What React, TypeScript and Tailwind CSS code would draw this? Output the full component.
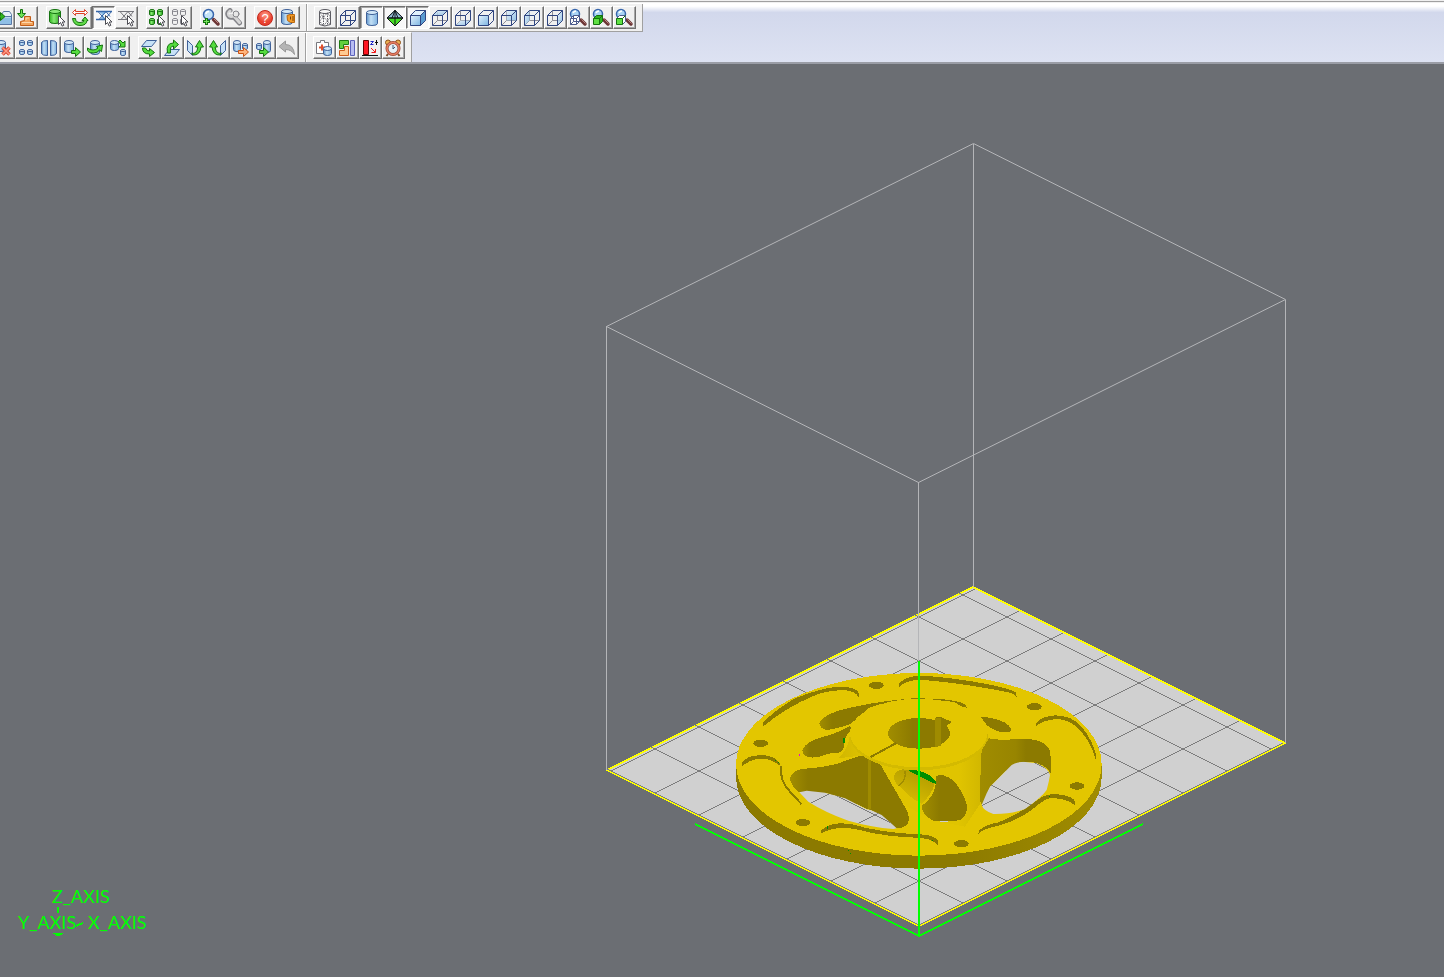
import type { ReactNode } from 'react';
import { clsx } from 'clsx';

interface Tool {
  label: string;
  icon: ReactNode;
  active?: boolean;
}

const NAVY = '#2f4580';
const BLUE = '#7fb2e0';
const GREEN = '#2fb51f';
const DARK_GREEN = '#14720f';

// ---- icon parts, all drawn on a 20x20 board ----

function Cursor({ x = 11, y = 7 }: { x?: number; y?: number }) {
  return (
    <path
      transform={`translate(${x} ${y})`}
      d="M.5.5v9l2-2 1.700 3.600 1.600-.8L4.300 7H7z"
      fill="#fff"
      stroke="#4b4b52"
    />
  );
}

function Cylinder({ x, y, w, h, tone = 'blue' }: { x: number; y: number; w: number; h: number; tone?: 'blue' | 'green' | 'gray' }) {
  const fill = { blue: 'url(#cylBlue)', green: 'url(#cylGreen)', gray: '#f1f1f1' }[tone];
  const top = { blue: '#d3e8f8', green: '#8be87a', gray: '#fff' }[tone];
  const line = { blue: '#3f6199', green: DARK_GREEN, gray: '#85858c' }[tone];
  const r = w > 6 ? 2 : 1;
  return (
    <g stroke={line}>
      <path d={`M${x} ${y + r}v${h - 2 * r}q0 ${r} ${w / 2} ${r}t${w / 2} -${r}v-${h - 2 * r}`} fill={fill} />
      <ellipse cx={x + w / 2} cy={y + r} rx={w / 2} ry={r} fill={top} />
    </g>
  );
}

type Face = 'top' | 'bottom' | 'front' | 'back' | 'left' | 'right';

const FACES: Record<Face, string> = {
  top: 'M2.500 7.500l5-5h10l-5 5z',
  bottom: 'M2.500 17.500l5-5h10l-5 5z',
  front: 'M2.500 7.500h10v10h-10z',
  back: 'M7.500 2.500h10v10h-10z',
  left: 'M2.500 7.500l5-5v10l-5 5z',
  right: 'M12.500 7.500l5-5v10l-5 5z',
};

function WireCube({ face }: { face?: Face }) {
  return (
    <g fill="none" stroke={NAVY}>
      {face !== 'front' && <path d="M7.500 2.500v10h10M7.500 12.500l-5 5" stroke={face ? '#8c8c96' : NAVY} />}
      {face && <path d={FACES[face]} fill="url(#faceBlue)" fillOpacity={face === 'front' ? 1 : 0.8} stroke="none" />}
      <path d="M2.500 7.500h10v10h-10zM2.500 7.500l5-5h10v10l-5 5M12.500 7.500l5-5" />
    </g>
  );
}

function SmallCube({ kind }: { kind: 'wire' | 'solid' | 'front' }) {
  const line = kind === 'wire' ? '#4a5a8c' : DARK_GREEN;
  return (
    <g stroke={line}>
      <path d="M2.500 10.500l3-3h6v6l-3 3" fill={kind === 'solid' ? GREEN : '#fff'} stroke={kind === 'front' ? '#4a5a8c' : line} />
      <path d="M2.500 10.500h6v6h-6z" fill={kind === 'wire' ? '#fff' : '#5fe043'} />
      <path d="M8.500 10.500l3-3" fill="none" />
      {kind === 'wire' && <path d="M5.500 7.500v6h6M5.500 13.500l-3 3" fill="none" />}
    </g>
  );
}

function ZoomCube({ kind }: { kind: 'wire' | 'solid' | 'front' }) {
  return (
    <>
      <path d="M13 12l4 4" stroke="#6b3434" strokeWidth="3.500" strokeLinecap="round" />
      <path d="M13.500 11.500l4 4" stroke="#b98783" />
      <circle cx="7" cy="6" r="4.500" fill="#a9d4f4" stroke="#3765ac" strokeWidth="1.500" />
      <path d="M5 5q1-2 3-2" stroke="#fff" fill="none" strokeWidth="1.500" />
      <SmallCube kind={kind} />
    </>
  );
}

function Mesh({ gray = false }: { gray?: boolean }) {
  return (
    <g stroke={gray ? '#77777d' : '#3566a8'} fill="none">
      {!gray && <path d="M5 3.500h8l-4 4zM9 7.500l3 4H6z" fill="#8fc0ea" stroke="none" />}
      <path d="M2 3.500h16M2 11.500h9" strokeWidth={gray ? 1 : 1.500} />
      <path d="M4 3.500l7 8M12 3.500l-7 8M12 3.500l4 5M17.500 3.500l-5 6" />
    </g>
  );
}

function GreenArrow({ d, color = GREEN, edge = DARK_GREEN }: { d: string; color?: string; edge?: string }) {
  return <path d={d} fill={color} stroke={edge} strokeLinejoin="round" />;
}

const RIGHT_ARROW = 'M9.500 12.500h4v-3l5 4.500-5 4.500v-3h-4z';

const fileTools: Tool[] = [
  {
    label: 'Import part',
    icon: (
      <>
        <path d="M1.500 6.500h7l2-3h6l2 3v10h-17z" fill="#e6f1fa" stroke="#5878a6" />
        <path d="M2 9.500h16v6.500H2z" fill="#8fbfe6" />
        <path d="M9 8.500h9" stroke="#5878a6" />
        <GreenArrow d="M2.500 7.500h5v-3l4.500 4-4.500 4v-3h-5z" />
      </>
    ),
  },
  {
    label: 'Load onto platform',
    icon: (
      <>
        <path d="M8.500 8.500h6v5h3v4h-13v-4l4-1z" fill="#f2a45c" stroke="#c25d18" />
        <path d="M6 14.500h10M10 12.500v-2.500h3" stroke="#ffd7ac" fill="none" />
        <GreenArrow d="M4.500 1.500h2v4h3l-4 4.500-4-4.500h3z" color="#6fe455" />
      </>
    ),
  },
];

const selectTools: Tool[] = [
  { label: 'Select part', icon: (<><Cylinder x={2.5} y={1.5} w={11} h={14} tone="green" /><Cursor /></>) },
  {
    label: 'Invert selection',
    icon: (
      <>
        <path d="M5.500 1.500l-3 3 3 3v-2h9v2l3-3-3-3v2h-9z" fill="#fff" stroke="#dc4328" />
        <path d="M2.500 10.500h3q0 4 4.500 4 4 0 4-2h-2l3-3.500 3 3.500h-1q-.5 5-7 5-6.500 0-7.500-7z" fill="#60db48" stroke={DARK_GREEN} />
      </>
    ),
  },
  { label: 'Select triangles', icon: (<><Mesh /><Cursor /></>), active: true },
  { label: 'Select shells', icon: (<><Mesh gray /><Cursor /></>) },
];

const partTiles = (tone: 'green' | 'gray') => (
  <>
    <Cylinder x={2.5} y={1.5} w={5} h={6} tone={tone} />
    <Cylinder x={10.5} y={1.5} w={5} h={6} tone={tone} />
    <Cylinder x={2.5} y={10.5} w={5} h={6} tone={tone} />
    <Cylinder x={10.5} y={10.5} w={5} h={6} tone={tone} />
    <Cursor />
  </>
);

const groupTools: Tool[] = [
  { label: 'Select all', icon: partTiles('green') },
  { label: 'Select none', icon: partTiles('gray') },
];

const repairTools: Tool[] = [
  {
    label: 'Zoom in',
    icon: (
      <>
        <path d="M12.500 11.500l4.500 4.500" stroke="#6b3434" strokeWidth="3.500" strokeLinecap="round" />
        <path d="M13 11l4 4" stroke="#b98783" />
        <circle cx="7.500" cy="6.500" r="5" fill="#c3e2f8" stroke="#3765ac" strokeWidth="1.500" />
        <path d="M5 6q0-2.500 3-2.500" stroke="#fff" fill="none" strokeWidth="1.500" />
        <path d="M5.500 10v7M2 13.500h7" stroke={DARK_GREEN} strokeWidth="3" />
        <path d="M5.500 11v5M3 13.500h5" stroke="#76e65a" />
      </>
    ),
  },
  {
    label: 'Fix wizard',
    icon: (
      <g fill="none" strokeLinecap="round">
        <path d="M6 2.500q-4 3-1 6 2 1.500 4.500 0l6 6.500" stroke="#85858a" strokeWidth="5" />
        <path d="M6 3q-3 3-.5 5 2 1 4-.5l6 7" stroke="#d6d6d6" strokeWidth="3" />
        <circle cx="12" cy="6" r="3" fill="#e8e8e8" stroke="#85858a" />
        <path d="M5.500 5.500l2.500 0" stroke="#f0f0f0" strokeWidth="2" />
      </g>
    ),
  },
];

const helpTools: Tool[] = [
  {
    label: 'Help',
    icon: (
      <>
        <circle cx="10" cy="10" r="7.500" fill="url(#helpRed)" stroke="#c3281c" />
        <text x="10" y="15" textAnchor="middle" fill="#fff" className="font-['Liberation_Sans'] text-[13px]">?</text>
      </>
    ),
  },
  {
    label: 'Machine',
    icon: (
      <>
        <Cylinder x={3.5} y={1.5} w={11} h={15} />
        <path d="M9 7.500l3-1h4.500v8h-4l-3-2z" fill="#f39b28" stroke="#b96810" />
        <path d="M12.500 8.500v3M15 8v5" stroke="#7e4205" />
      </>
    ),
  },
];

const viewTools: Tool[] = [
  {
    label: 'Triangle view',
    icon: (
      <g fill="#fafafa" stroke="#5b5b62">
        <path d="M4.500 3.500v13q5 3 11 0v-13" />
        <ellipse cx="10" cy="3.500" rx="5.500" ry="2" />
        <path d="M4.500 5l4 4-4 4 4 5M8.500 5v13l4-5-4-4 4-4 3 4-3 4 3 4M12.500 5v12.500M4.500 9h4" fill="none" strokeDasharray="1.500 1" />
      </g>
    ),
  },
  { label: 'Wireframe', icon: <WireCube /> },
  { label: 'Shaded', icon: <Cylinder x={4.5} y={2.5} w={11} h={15} />, active: true },
  {
    label: 'Shaded wireframe',
    icon: (
      <g stroke="#101418" strokeLinejoin="round">
        <path d="M2 10L10 2.500 18 10l-8 8z" fill="#46df25" />
        <path d="M2 10L10 2.500 18 10z" fill="#9cc4dd" />
        <path d="M10 2.500L7 10M10 2.500l3 7.500M2 10h16" fill="none" />
        <path d="M10 2.500v15" />
      </g>
    ),
    active: true,
  },
  {
    label: 'Isometric view',
    icon: (
      <g stroke={NAVY} strokeLinejoin="round">
        <path d="M2.500 7.500l5-5h10l-5 5z" fill="#e1f1fc" />
        <path d="M12.500 7.500l5-5v10l-5 5z" fill="#5a9bd0" />
        <path d="M2.500 7.500h10v10h-10z" fill="url(#faceBlue)" />
      </g>
    ),
    active: true,
  },
  { label: 'Top view', icon: <WireCube face="top" /> },
  { label: 'Bottom view', icon: <WireCube face="bottom" /> },
  { label: 'Front view', icon: <WireCube face="front" /> },
  { label: 'Back view', icon: <WireCube face="back" /> },
  { label: 'Left view', icon: <WireCube face="left" /> },
  { label: 'Right view', icon: <WireCube face="right" /> },
  { label: 'Zoom platform', icon: <ZoomCube kind="wire" /> },
  { label: 'Zoom parts', icon: <ZoomCube kind="solid" /> },
  { label: 'Zoom selected', icon: <ZoomCube kind="front" /> },
];

const editTools: Tool[] = [
  {
    label: 'Remove part',
    icon: (
      <>
        <Cylinder x={3.5} y={2.5} w={9} h={11} />
        <path d="M9.500 9.500l7 7M16.500 9.500l-7 7" stroke="#d8432f" strokeWidth="3.500" />
        <path d="M9.500 9.500l7 7M16.500 9.500l-7 7" stroke="#ff9c86" strokeWidth="1.500" />
      </>
    ),
  },
  {
    label: 'Duplicate part',
    icon: (
      <>
        <Cylinder x={3.5} y={2.5} w={5} h={5} />
        <Cylinder x={11.5} y={2.5} w={5} h={5} />
        <Cylinder x={3.5} y={11.5} w={5} h={5} />
        <Cylinder x={11.5} y={11.5} w={5} h={5} />
      </>
    ),
  },
  {
    label: 'Mirror part',
    icon: (
      <g stroke="#3f6199" fill="url(#cylBlue)">
        <path d="M8.500 2.500q-5 0-6 2v11q1 2 6 2z" />
        <path d="M11.500 2.500q5 0 6 2v11q-1 2-6 2z" />
      </g>
    ),
  },
  { label: 'Move part', icon: (<><Cylinder x={2.5} y={2.5} w={9} h={12} /><GreenArrow d={RIGHT_ARROW} color="#54dc3e" /></>) },
  {
    label: 'Rotate part',
    icon: (
      <>
        <Cylinder x={5.5} y={2.5} w={9} h={14} />
        <path d="M2.500 10q-1 5 6 5 4 0 6-3l2 1.500 1-6.500-6 1.500 1.500 1.500q-2 2-5 2-3 0-5.500-2z" fill="#54dc3e" stroke={DARK_GREEN} />
      </>
    ),
  },
  {
    label: 'Scale part',
    icon: (
      <>
        <Cylinder x={2.5} y={2.5} w={8} h={10} />
        <Cylinder x={12.5} y={11.5} w={5} h={6} />
        <GreenArrow d="M10.500 3.500l1.500-1.500 3 3 2-2v6h-6l2-2z" color="#54dc3e" />
      </>
    ),
  },
];

const FLAT = 'M7.500 2.500h10l-5 6h-10z';
const UP_ARROW = 'M5.500 16q5 2 6.500-6h-2.500l4-6.500 4 6.500h-2.500q-1 8.500-8 8z';

const orientTools: Tool[] = [
  {
    label: 'Top to bottom',
    icon: (
      <>
        <path d={FLAT} fill="#c7e1f6" stroke="#3f6199" />
        <path d="M3.500 10q0 6 7 6v2.500l5-4-5-4v2.500q-3 0-4-3z" fill="#54dc3e" stroke={DARK_GREEN} />
      </>
    ),
  },
  {
    label: 'Bottom to top',
    icon: (
      <>
        <path d={FLAT} fill="#c7e1f6" stroke="#3f6199" transform="translate(0 9)" />
        <path d="M5.500 15q-2-10 6-10v-3l5 4.500-5 4.500v-3q-4 0-3 7z" fill="#54dc3e" stroke={DARK_GREEN} />
      </>
    ),
  },
  {
    label: 'Left to right',
    icon: (
      <>
        <path d="M2.500 2.500l5 5v10l-5-5z" fill="#c7e1f6" stroke="#3f6199" />
        <path d={UP_ARROW} transform="translate(1 -1)" fill="#54dc3e" stroke={DARK_GREEN} />
      </>
    ),
  },
  {
    label: 'Right to left',
    icon: (
      <>
        <path d="M17.500 2.500l-5 5v10l5-5z" fill="#c7e1f6" stroke="#3f6199" />
        <path d={UP_ARROW} transform="translate(19 -1) scale(-1 1)" fill="#54dc3e" stroke={DARK_GREEN} />
      </>
    ),
  },
  {
    label: 'Send part',
    icon: (
      <>
        <Cylinder x={2.5} y={2.5} w={7} h={11} />
        <Cylinder x={11.5} y={5.5} w={5} h={6} />
        <GreenArrow d="M7.500 12.500h5v-3l5 4.500-5 4.500v-3h-5z" color="#ffb47c" edge="#cc5514" />
      </>
    ),
  },
  {
    label: 'Receive part',
    icon: (
      <>
        <Cylinder x={2.5} y={5.5} w={5} h={6} />
        <Cylinder x={9.5} y={2.5} w={7} h={12} />
        <GreenArrow d="M5.500 12.500h4v-3l5 4.500-5 4.500v-3h-4z" color="#54dc3e" />
      </>
    ),
  },
  { label: 'Undo', icon: <path d="M2 8.500L8.500 3v3.500q8 0 9 10-3-5-9-5V14z" fill="#b4b4b4" stroke="#989898" /> },
];

const jobTools: Tool[] = [
  {
    label: 'Part diagnosis',
    icon: (
      <>
        <path d="M2.500 4.500h4v-2h4v2h4v11h-12z" fill="#fff" stroke="#77777d" />
        <path d="M8 6.500v6M5 9.500h6" stroke="#e0512d" strokeWidth="2" />
        <Cylinder x={9.5} y={8.5} w={8} h={9} />
      </>
    ),
  },
  {
    label: 'Arrange parts',
    icon: (
      <>
        <path d="M2.500 2.500h9v4h-5v4h-4z" fill="#62cf3c" stroke="#1f7a12" />
        <path d="M13.500 2.500h4v15h-4z" fill="#b8bdf2" stroke="#5c62bb" />
        <path d="M7.500 8.500h4v9h-9v-5h5z" fill="#ffca92" stroke="#cf5c1a" />
      </>
    ),
  },
  {
    label: 'Build height',
    icon: (
      <>
        <path d="M3.500 2.500h5v14h-5z" fill="#ff1420" stroke="#600" />
        <path d="M2 17.500h16" stroke="#111" />
        <path d="M10.500 3.500h3l-3 3h3" stroke="#1f25c8" fill="none" />
        <path d="M16.500 2v5M15 4.500h3" stroke="#111" fill="none" />
        <path d="M11 10l4 4M15.500 11v3.500h-4" stroke="#f01515" fill="none" />
      </>
    ),
  },
  {
    label: 'Build time',
    icon: (
      <>
        <path d="M5 16l-1.500 2M15 16l1.500 2" stroke="#7b4a28" strokeWidth="2" />
        <circle cx="5" cy="4.500" r="2.500" fill="#ecb051" stroke="#8f5218" />
        <circle cx="15" cy="4.500" r="2.500" fill="#ecb051" stroke="#8f5218" />
        <circle cx="10" cy="10.500" r="6" fill="#e6f0f6" stroke="#9c4a38" strokeWidth="3" />
        <circle cx="10" cy="10.500" r="6" stroke="#e87f62" strokeWidth="1.500" />
        <path d="M10 7v4l2-2" stroke="#3e5872" fill="none" />
      </>
    ),
  },
];

function ToolGroup({ tools }: { tools: Tool[] }) {
  return (
    <div className="flex shrink-0">
      {tools.map((tool) => (
        <button
          key={tool.label}
          type="button"
          aria-label={tool.label}
          aria-pressed={tool.active}
          className={clsx(
            'h-[23px] w-[23px] shrink-0 border',
            tool.active
              ? 'border-t-[#707070] border-r-white border-b-white border-l-[#707070] bg-[#f8f8f8] pt-px pl-px shadow-[inset_1px_1px_0_#a6a6a6]'
              : 'border-t-white border-r-[#707070] border-b-[#707070] border-l-white bg-[#f0f0f0] shadow-[inset_-1px_-1px_0_#a6a6a6]'
          )}
        >
          <svg viewBox="0 0 20 20" className="h-5 w-5" fill="none" aria-hidden="true">
            {tool.icon}
          </svg>
        </button>
      ))}
    </div>
  );
}

function Separator() {
  return <div className="mx-1.5 w-0.5 shrink-0 self-stretch border-l border-[#a0a0a0] bg-white" />;
}

// ---- build platform ----

const LINES_DOWN = [0, 1, 2, 3, 4, 5, 6, 7, 8].map((k) => ({
  x1: 963 - 44 * k - 4,
  y1: 595 + 22 * k - 2,
  x2: 963 - 44 * k + 308,
  y2: 595 + 22 * k + 154,
}));

const LINES_UP = [0, 1, 2, 3, 4, 5, 6, 7].map((k) => ({
  x1: 963 + 44 * k + 12,
  y1: 595 + 22 * k - 6,
  x2: 963 + 44 * k - 352,
  y2: 595 + 22 * k + 176,
}));

function PlatformGrid() {
  return (
    <g stroke="#7d7d7d">
      {[...LINES_DOWN, ...LINES_UP].map((l) => (
        <line key={`${l.x1}-${l.x2}`} {...l} />
      ))}
    </g>
  );
}

const BOLTS = [
  [454, 76],
  [107, 250],
  [234, 488],
  [709, 551],
  [1056, 378],
  [928, 140],
];

const OPENINGS =
  'M223 397L245 392 300 398 360 415 425 448 437 450 470 465 495 487 515 505 505 507Q440 502 370 482 300 457 250 425z' +
  'M895 305L935 310Q970 325 975 345 972 365 965 390 950 412 900 447 860 463 805 462 775 452 770 435L785 400 795 380 825 350 860 315Q875 306 895 305z' +
  'M645 483h24v3h-24z';

// The wheel is drawn at three units per screen pixel
function Wheel() {
  return (
    <svg x="725" y="660" width="400" height="220" viewBox="0 0 1200 660">
      <path d="M33 313v39A548.500 274 0 0 0 1130 352v-39z" fill="url(#rim)" />
      <ellipse cx="581.500" cy="313" rx="548.500" ry="274" fill="#e3c600" />

      {/* slots along the rim */}
      <g fill="#8c7a00">
        <path d="M115 199V187Q150 150 210 115 300 80 350 80 395 82 402 100V112Q390 92 355 90 300 92 260 110 180 145 115 199z" />
        <path d="M523 80V70Q540 50 585 47 680 51 800 75 860 88 873 98L875 112Q868 102 850 97 720 70 585 59 545 61 523 80z" />
        <path d="M50 320V308Q65 288 100 286 145 282 165 310L163 316Q140 296 105 296 75 298 50 320z" />
        <path d="M287 521V513Q310 490 345 490 380 490 420 503 500 520 570 522 630 524 638 542V555Q620 533 570 533 480 529 420 514 340 491 287 521z" />
        <path d="M934 198V188Q955 168 990 166 1040 166 1070 200 1105 245 1113 285V302Q1100 250 1065 210 1035 178 995 177 955 180 934 198z" />
        <path d="M760 521Q760 500 820 487 880 465 940 418 965 400 1000 403 1045 408 1050 425V437Q1030 416 980 414 960 414 920 450 870 485 820 497 775 506 760 521z" />
        {BOLTS.map(([cx, cy]) => (
          <ellipse key={cx} cx={cx} cy={cy} rx="22" ry="11" />
        ))}
      </g>
      <path d="M167 318Q165 365 195 395L229 432" fill="none" stroke="#8c7a00" strokeWidth="6" />

      {/* openings behind the hub */}
      <path d="M283 190Q285 172 340 152 430 128 540 117L540 120Q460 130 430 145L385 185Q370 200 305 210 287 208 283 190z" fill="url(#wall)" />
      <path d="M558 116h42M622 118Q710 122 722 138" fill="none" stroke="#8c7a00" strokeWidth="4" />
      <path d="M688 126Q720 131 725 143L710 140z" fill="#8c7a00" />
      <path d="M375 197L381 208Q360 225 358 250 358 276 340 278 315 277 285 290 235 300 232 272 240 244 300 229 350 215 375 197z" fill="url(#wall)" />
      <path d="M767 171Q810 172 840 188 862 202 857 214 825 225 785 195z" fill="#8c7a00" />

      {/* hub body */}
      <path d="M376 219Q370 270 340 295L405 287 467 315 530 430 620 480 720 500 766 430 768 300 792 240 787 219z" fill="url(#hub)" />

      {/* window walls */}
      <path d="M195 355Q200 330 240 326 300 322 340 310L405 287Q445 287 467 315L545 450Q558 480 545 495 530 507 510 504L480 480 440 450 425 447 360 415 300 398 223 397Q196 376 195 355z" fill="url(#wall)" />
      <path d="M429 291h9v157h-9z" fill="#9f8b00" />
      <path d="M770 270L792 235 830 240 900 236Q965 240 975 275 979 300 977 340 960 305 895 305 870 305 825 350L795 380 772 435 765 425V380z" fill="url(#wallRight)" />

      {/* clamp bore and pocket */}
      <path d="M507 350Q512 330 535 328 580 328 630 363 630 390 590 432 550 410 523 378 508 370 507 350z" fill="url(#bore)" />
      <path d="M540 332Q545 360 521 378" fill="none" stroke="#a18d00" strokeWidth="4" />
      <path d="M545 328Q590 328 620 350L633 364 632 372 575 345z" fill="#008e00" />
      <path d="M633 350Q650 338 680 358 715 390 725 435 728 470 705 480 670 487 625 482 593 468 590 438 625 415 633 370z" fill="url(#pocket)" />

      <path d="M375 219A206 103 0 0 0 787 219v9A206 103 0 0 1 375 228z" fill="#d4ba00" />
      <ellipse cx="581" cy="219" rx="206" ry="103" fill="#e3c600" />
      <ellipse cx="582" cy="220" rx="93" ry="46" fill="url(#bore2)" />
      <path d="M630 173L648 170 663 179 678 184 675 192 665 195 670 207 630 200z" fill="#8c7a00" />
      <path d="M630 173h17v84l-17 5z" fill="#9f8b00" />
      <path d="M514 249L437 291" stroke="#8c7a00" strokeWidth="6" />

      <g clipPath="url(#openings)">
        <path d="M0 0h1200v660H0z" fill="#d0d0d0" />
        <g transform="scale(3) translate(-725 -660)">
          <PlatformGrid />
        </g>
      </g>

      <g fill="#008e00">
        <path d="M355 234h4v14h-4zM150 300h4v4h-4zM158 306h5v4h-5zM306 499h4v9h-4zM370 570h3v4h-3zM375 578h3v4h-3zM621 540h4v3h-4zM972 407h4v4h-4z" />
        <path d="M221 283h4v5h-4z" fill="#e010d0" />
      </g>
    </svg>
  );
}

function Viewport() {
  return (
    <main className="relative flex flex-1 flex-col bg-[#6b6e73]">
      <svg
        viewBox="0 64 1444 913"
        preserveAspectRatio="xMinYMin meet"
        shapeRendering="crispEdges"
        className="w-full flex-1"
        role="img"
        aria-label="Build platform with wheel part"
      >
        <path d="M973 587L1285 743 919 926 607 770z" fill="#d0d0d0" />
        <path d="M973 587L1285 743 919 926 607 770z" fill="none" stroke="#ff0" strokeWidth="2" />
        <PlatformGrid />
        <g fill="none" stroke="#b4b5b8">
          <path d="M973.500 143.500L1285.500 299.500 918.500 482.500 606.500 326.500z" shapeRendering="geometricPrecision" />
          <path d="M606.500 326v444M973.500 144v443M1285.500 300v443M918.500 482v180" />
        </g>
        <Wheel />
        <path d="M919 661v275M695 824l224 112 224-112" fill="none" stroke="#0f0" strokeWidth="2" />
        <g fill="#0f0" className="font-[Lato] text-[18px]">
          <text x="52" y="903">Z_AXIS</text>
          <text x="18" y="929">Y_AXIS</text>
          <text x="88" y="929">X_AXIS</text>
          <path d="M57 907h2v6h-2zM53 933h10v1l-3 1v1h-4v-1l-3-1zM76 925l7-3v2l-7 3z" />
        </g>
      </svg>
    </main>
  );
}

function Gradients() {
  return (
    <svg className="absolute h-0 w-0" aria-hidden="true">
      <defs>
        <linearGradient id="cylBlue">
          <stop offset="0" stopColor="#5d93cb" />
          <stop offset=".4" stopColor="#c4e0f5" />
          <stop offset="1" stopColor={BLUE} />
        </linearGradient>
        <linearGradient id="cylGreen">
          <stop offset="0" stopColor="#2fb51f" />
          <stop offset=".4" stopColor="#86e873" />
          <stop offset="1" stopColor="#25a318" />
        </linearGradient>
        <linearGradient id="faceBlue" x2="1" y2="1">
          <stop offset="0" stopColor="#e4f2fc" />
          <stop offset="1" stopColor="#7db5e2" />
        </linearGradient>
        <radialGradient id="helpRed" cy=".3">
          <stop offset="0" stopColor="#ff9a86" />
          <stop offset="1" stopColor="#e8402e" />
        </radialGradient>
        <linearGradient id="rim">
          <stop offset=".6" stopColor="#8c7a00" />
          <stop offset="1" stopColor="#a08c00" />
        </linearGradient>
        <linearGradient id="wall">
          <stop offset="0" stopColor="#a18d00" />
          <stop offset=".15" stopColor="#8c7a00" />
        </linearGradient>
        <linearGradient id="wallRight">
          <stop offset="0" stopColor="#a08c00" />
          <stop offset=".5" stopColor="#988500" />
          <stop offset=".65" stopColor="#8c7a00" />
        </linearGradient>
        <linearGradient id="hub">
          <stop offset="0" stopColor="#d2b700" />
          <stop offset=".2" stopColor="#e0c400" />
          <stop offset=".8" stopColor="#e0c400" />
          <stop offset="1" stopColor="#cdb300" />
        </linearGradient>
        <linearGradient id="bore" x1=".2" y1="1" x2=".7" y2="0">
          <stop offset="0" stopColor="#dbbf00" />
          <stop offset="1" stopColor="#b09a00" />
        </linearGradient>
        <linearGradient id="bore2">
          <stop offset="0" stopColor="#a18d00" />
          <stop offset=".4" stopColor="#8c7a00" />
        </linearGradient>
        <linearGradient id="pocket">
          <stop offset="0" stopColor="#a18d00" />
          <stop offset=".4" stopColor="#8c7a00" />
        </linearGradient>
        <clipPath id="openings">
          <path d={OPENINGS} />
        </clipPath>
      </defs>
    </svg>
  );
}

export default function App() {
  return (
    <div className="flex min-h-screen flex-col overflow-hidden bg-[#6b6e73]">
      <Gradients />
      <header className="border-b-2 border-[#9a9da6] bg-linear-to-b from-white from-10% via-[#d2d8ec] via-20% to-[#dde2f2]">
        <div className="h-1 border-b border-white bg-[#f0f0f0]">
          <div className="h-0.5 border-b border-[#a0a0a0]" />
        </div>
        <div className="flex">
          <div role="toolbar" aria-label="Standard" className="flex border-r border-b border-[#a0a0a0] bg-[#f0f0f0] pr-1.5">
            <div className="-ml-2 flex gap-2 pt-0.5 pb-0.5">
              <ToolGroup tools={fileTools} />
              <ToolGroup tools={selectTools} />
              <ToolGroup tools={groupTools} />
              <ToolGroup tools={repairTools} />
              <ToolGroup tools={helpTools} />
            </div>
            <Separator />
            <div className="pt-0.5 pb-0.5">
              <ToolGroup tools={viewTools} />
            </div>
          </div>
        </div>
        <div className="flex">
          <div role="toolbar" aria-label="Parts" className="flex border-t border-r border-t-white border-r-[#a0a0a0] bg-[#f0f0f0] pr-1.5">
            <div className="-ml-2 flex gap-2 pt-[3px] pb-[3px]">
              <ToolGroup tools={editTools} />
              <ToolGroup tools={orientTools} />
            </div>
            <Separator />
            <div className="pt-[3px] pb-[3px]">
              <ToolGroup tools={jobTools} />
            </div>
          </div>
        </div>
      </header>
      <Viewport />
    </div>
  );
}
